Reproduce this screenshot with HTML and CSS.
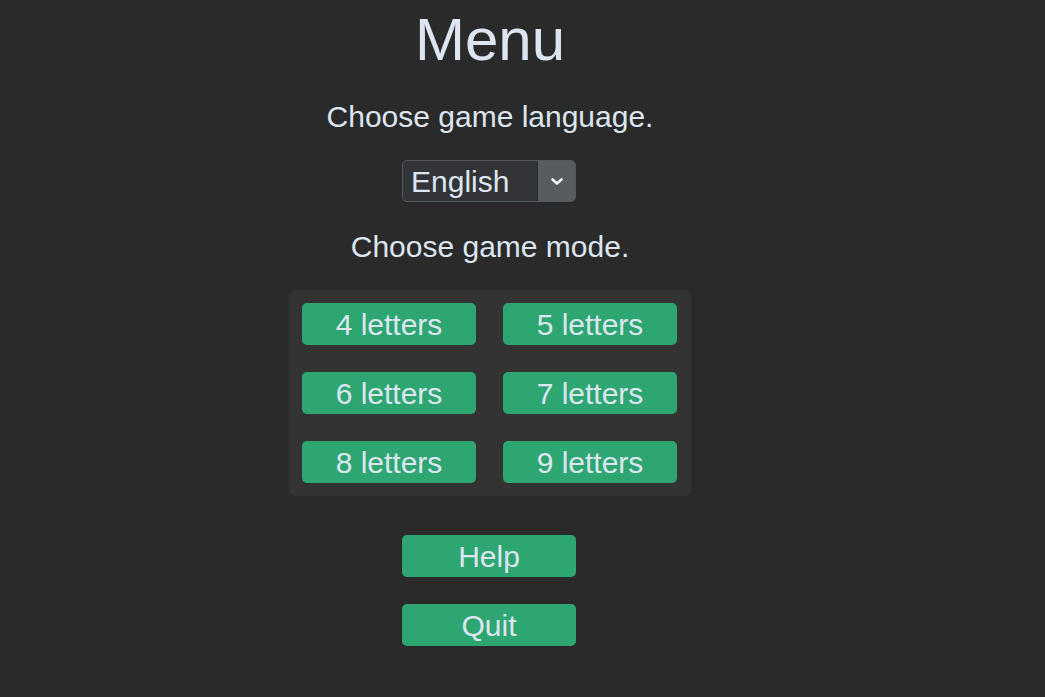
FILE: index.html
```html
<!DOCTYPE html>
<html lang="en">
<head>
<meta charset="utf-8">
<title>Menu</title>
<link rel="stylesheet" href="styles.css">
</head>
<body>
<div class="page">
  <h1 class="title">Menu</h1>
  <p class="prompt">Choose game language.</p>
  <div class="select">
    <span class="select-value">English</span>
    <span class="select-arrow">
      <svg width="12" height="8" viewBox="0 0 12 8"><polyline points="1.5,1.5 6,5.5 10.5,1.5" fill="none" stroke="#eef2f6" stroke-width="2.6" stroke-linecap="round" stroke-linejoin="round"/></svg>
    </span>
  </div>
  <p class="prompt prompt-mode">Choose game mode.</p>
  <div class="modes">
    <button class="btn">4 letters</button>
    <button class="btn">5 letters</button>
    <button class="btn">6 letters</button>
    <button class="btn">7 letters</button>
    <button class="btn">8 letters</button>
    <button class="btn">9 letters</button>
  </div>
  <button class="btn btn-help">Help</button>
  <button class="btn btn-quit">Quit</button>
</div>
</body>
</html>
```
FILE: styles.css
```css
html, body {
  margin: 0;
  padding: 0;
  background: #2a2a2a;
}
body {
  font-family: "Liberation Sans", Arial, sans-serif;
  color: #dde6f0;
}
.page {
  width: 980px;
  display: flex;
  flex-direction: column;
  align-items: center;
}
.title {
  margin: 6px 0 0;
  font-size: 60px;
  line-height: 68px;
  font-weight: normal;
}
.prompt {
  margin: 26px 0 0;
  font-size: 30px;
  line-height: 34px;
}
.prompt-mode {
  margin-top: 28px;
}
.select {
  margin-top: 26px;
  margin-right: 2px;
  width: 174px;
  height: 42px;
  box-sizing: border-box;
  border: 1px solid #53585c;
  border-radius: 5px;
  background: #323437;
  display: flex;
  overflow: hidden;
}
.select-value {
  flex: 1;
  padding-left: 8px;
  font-size: 30px;
  line-height: 41px;
  text-align: left;
  border-right: 1px solid #2c2e30;
}
.select-arrow {
  width: 37px;
  background: #575c60;
  display: flex;
  align-items: center;
  justify-content: center;
}
.select-arrow svg {
  display: block;
  margin-top: 1px;
}
.modes {
  margin-top: 26px;
  background: #333333;
  border-radius: 6px;
  padding: 13px 14px 13px 13px;
  display: grid;
  grid-template-columns: 174px 174px;
  column-gap: 27px;
  row-gap: 27px;
}
.btn {
  box-sizing: border-box;
  width: 174px;
  height: 42px;
  padding: 2px 0 0;
  border: none;
  border-radius: 5px;
  background: #2ea672;
  color: #dde6f0;
  font-family: "Liberation Sans", Arial, sans-serif;
  font-size: 30px;
  line-height: 40px;
  text-align: center;
}
.btn-help {
  margin-top: 39px;
  margin-right: 2px;
}
.btn-quit {
  margin-top: 27px;
  margin-right: 2px;
}
```
